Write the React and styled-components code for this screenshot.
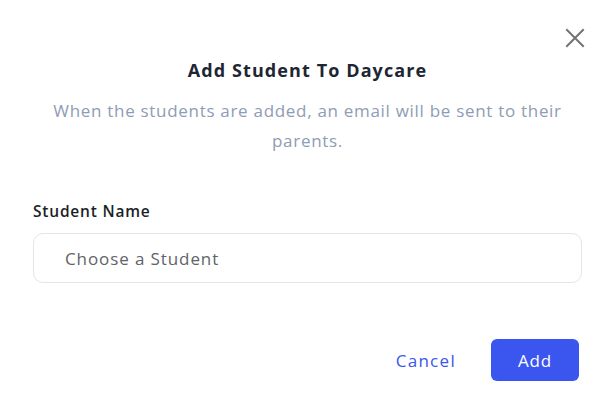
import React from 'react';
import styled, { createGlobalStyle } from 'styled-components';

const GlobalStyle = createGlobalStyle`
  html, body {
    margin: 0;
    padding: 0;
    background: #ffffff;
  }
  body {
    font-family: "Open Sans", "Liberation Sans", sans-serif;
  }
`;

const Modal = styled.div`
  position: relative;
  width: 615px;
  height: 401px;
  box-sizing: border-box;
  padding: 57px 33px 0;
  display: flex;
  flex-direction: column;
  background: #fff;
`;

const CloseButton = styled.button`
  position: absolute;
  top: 26px;
  right: 28px;
  width: 24px;
  height: 24px;
  padding: 0;
  border: none;
  background: none;
  display: flex;
  align-items: center;
  justify-content: center;
  cursor: pointer;
`;

const Title = styled.h2`
  margin: 0;
  text-align: center;
  font-size: 18px;
  font-weight: 700;
  letter-spacing: 1.1px;
  line-height: 26px;
  color: #1e2533;
`;

const Subtitle = styled.p`
  margin: 13px auto 0;
  max-width: 530px;
  text-align: center;
  font-size: 17px;
  letter-spacing: 0.7px;
  line-height: 30px;
  color: #8e9cb5;
`;

const Field = styled.div`
  margin-top: 45px;
  display: flex;
  flex-direction: column;
  gap: 12px;
`;

const Label = styled.label`
  font-size: 15.5px;
  font-weight: 600;
  letter-spacing: 0.8px;
  line-height: 20px;
  color: #1b1f27;
`;

const Select = styled.div`
  height: 50px;
  box-sizing: border-box;
  border: 1px solid #e3e5e9;
  border-radius: 10px;
  padding: 0 31px;
  display: flex;
  align-items: center;
  font-size: 17px;
  letter-spacing: 0.9px;
  color: #5f6368;
`;

const Footer = styled.div`
  margin-top: 56px;
  display: flex;
  justify-content: flex-end;
  align-items: center;
  gap: 35px;
  padding-right: 3px;
`;

const Button = styled.button`
  font-family: inherit;
  font-size: 17px;
  font-weight: 500;
  letter-spacing: ${(p) => (p.$primary ? '0.8px' : '1.3px')};
  height: 42px;
  border-radius: 6px;
  border: none;
  cursor: pointer;
  padding: 0;
  color: ${(p) => (p.$primary ? '#ffffff' : '#3b55ef')};
  background: ${(p) => (p.$primary ? '#3b55ef' : 'transparent')};
  width: ${(p) => (p.$primary ? '88px' : 'auto')};
`;

export default function App() {
  return (
    <>
      <GlobalStyle />
      <Modal>
        <CloseButton aria-label="Close">
          <svg width="20" height="20" viewBox="0 0 20 20">
            <path d="M2 2L18 18M18 2L2 18" stroke="#737373" strokeWidth="2" strokeLinecap="square" />
          </svg>
        </CloseButton>
        <Title>Add Student To Daycare</Title>
        <Subtitle>
          When the students are added, an email will be sent to their parents.
        </Subtitle>
        <Field>
          <Label>Student Name</Label>
          <Select>Choose a Student</Select>
        </Field>
        <Footer>
          <Button>Cancel</Button>
          <Button $primary>Add</Button>
        </Footer>
      </Modal>
    </>
  );
}
